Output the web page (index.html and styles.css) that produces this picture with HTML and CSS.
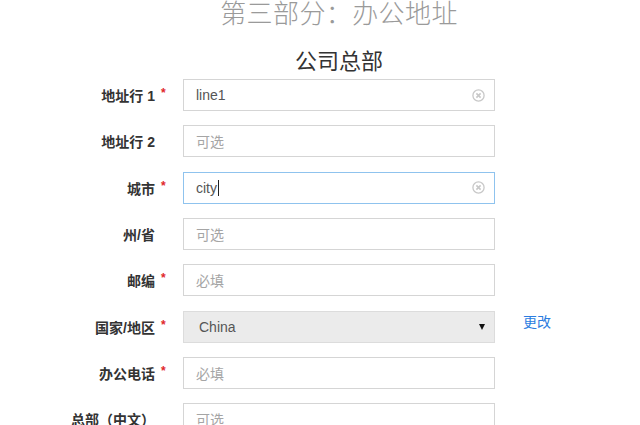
FILE: index.html
```html
<!DOCTYPE html>
<html lang="zh">
<head>
<meta charset="utf-8">
<link rel="stylesheet" href="styles.css">
</head>
<body>
<div class="page">
  <h1 class="title">第三部分：办公地址</h1>
  <h2 class="subtitle">公司总部</h2>
  <div class="form">
    <div class="row">
      <div class="label">地址行 1</div><div class="req">*</div>
      <div class="field"><span class="val">line1</span><span class="clear"><svg width="13" height="13" viewBox="0 0 13 13"><circle cx="6.5" cy="6.5" r="5.6" fill="none" stroke="#c8c8c8" stroke-width="1.3"/><path d="M4.4 4.4 L8.6 8.6 M8.6 4.4 L4.4 8.6" stroke="#c8c8c8" stroke-width="1.6"/></svg></span></div>
    </div>
    <div class="row">
      <div class="label">地址行 2</div><div class="req"></div>
      <div class="field"><span class="ph">可选</span></div>
    </div>
    <div class="row">
      <div class="label">城市</div><div class="req">*</div>
      <div class="field focus"><span class="val">city</span><span class="caret"></span><span class="clear"><svg width="13" height="13" viewBox="0 0 13 13"><circle cx="6.5" cy="6.5" r="5.6" fill="none" stroke="#c8c8c8" stroke-width="1.3"/><path d="M4.4 4.4 L8.6 8.6 M8.6 4.4 L4.4 8.6" stroke="#c8c8c8" stroke-width="1.6"/></svg></span></div>
    </div>
    <div class="row">
      <div class="label">州/省</div><div class="req"></div>
      <div class="field"><span class="ph">可选</span></div>
    </div>
    <div class="row">
      <div class="label">邮编</div><div class="req">*</div>
      <div class="field"><span class="ph">必填</span></div>
    </div>
    <div class="row">
      <div class="label">国家/地区</div><div class="req">*</div>
      <div class="field select"><span class="sval">China</span><span class="arrow"></span></div>
      <a class="change">更改</a>
    </div>
    <div class="row">
      <div class="label">办公电话</div><div class="req">*</div>
      <div class="field"><span class="ph">必填</span></div>
    </div>
    <div class="row">
      <div class="label">总部（中文）</div><div class="req"></div>
      <div class="field"><span class="ph">可选</span></div>
    </div>
  </div>
</div>
</body>
</html>
```
FILE: styles.css
```css
html, body {
  margin: 0;
  padding: 0;
  background: #fff;
  overflow: hidden;
}
body {
  font-family: "Liberation Sans", "Noto Sans CJK SC", sans-serif;
  color: #333;
}
.page {
  width: 640px;
}
.title {
  margin: -7px 0 0 0;
  padding-left: 38px;
  text-align: center;
  font-family: "Noto Sans CJK SC", sans-serif;
  font-weight: 300;
  font-size: 26px;
  line-height: 38px;
  color: #9a9a9a;
  letter-spacing: 0.4px;
}
.subtitle {
  margin: 13px 0 0 0;
  padding-left: 38px;
  text-align: center;
  font-family: "Noto Sans CJK SC", sans-serif;
  font-weight: 400;
  font-size: 22px;
  line-height: 30px;
  color: #333;
}
.form {
  margin-top: 5px;
  display: flex;
  flex-direction: column;
  gap: 14.33px;
}
.row {
  display: flex;
  align-items: center;
  height: 32px;
}
.label {
  width: 155px;
  text-align: right;
  font-size: 14px;
  font-weight: bold;
  color: #333;
  font-family: "Liberation Sans", "Noto Sans CJK SC", sans-serif;
}
.req {
  width: 28px;
  box-sizing: border-box;
  padding-left: 6px;
  color: #e0262b;
  font-size: 12px;
  font-weight: bold;
  height: 32px;
  line-height: 32px;
  position: relative;
  top: -2px;
}
.field {
  width: 312px;
  height: 32px;
  box-sizing: border-box;
  border: 1px solid #d5d5d5;
  background: #fff;
  display: flex;
  align-items: center;
  padding: 0 12px 0 12px;
  font-size: 14px;
  position: relative;
}
.field.focus {
  border-color: #8fc3ee;
}
.val {
  color: #555;
  font-family: "Liberation Sans", sans-serif;
}
.ph {
  color: #a5a5a5;
  font-family: "Noto Sans CJK SC", sans-serif;
  font-size: 14px;
}
.caret {
  width: 1px;
  height: 16px;
  background: #222;
  margin-left: 1px;
}
.clear {
  margin-left: auto;
  margin-right: -3px;
  display: flex;
}
.select {
  background: #ebebeb;
  border-color: #dcdcdc;
  padding-left: 15px;
}
.sval {
  color: #555;
  font-family: "Liberation Sans", sans-serif;
}
.arrow {
  margin-left: auto;
  margin-right: -3px;
  width: 0;
  height: 0;
  border-left: 3.5px solid transparent;
  border-right: 3.5px solid transparent;
  border-top: 6px solid #111;
}
.change {
  margin-left: 28px;
  color: #2b7de0;
  font-size: 14px;
  font-family: "Noto Sans CJK SC", sans-serif;
  align-self: flex-start;
  line-height: 20px;
}
```
